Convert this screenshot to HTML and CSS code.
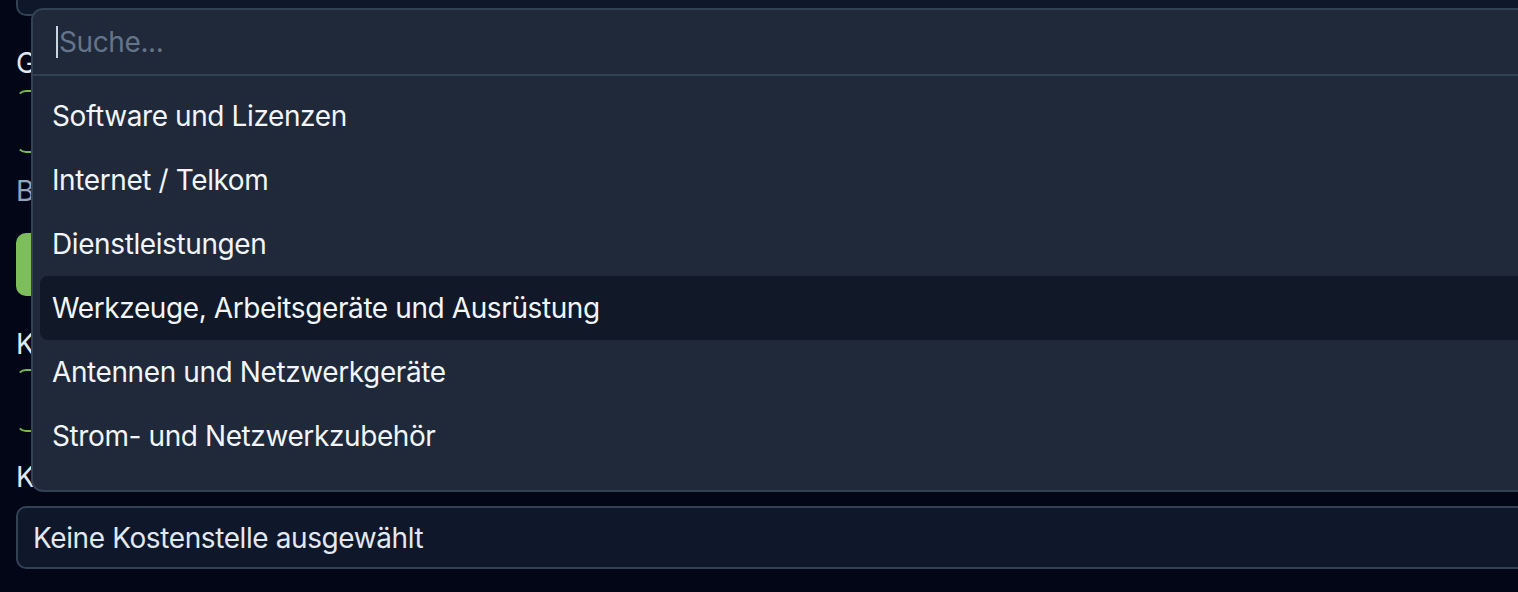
FILE: index.html
```html
<!DOCTYPE html>
<html lang="de">
<head>
<meta charset="utf-8">
<title>Kategorie auswählen</title>
<link rel="stylesheet" href="styles.css">
</head>
<body>
<div class="form">
  <div class="field field-top"></div>
  <div class="label label-g">Gegenstand</div>
  <div class="field field-green field-g"></div>
  <div class="label label-muted label-b">Beleg</div>
  <div class="button-green"></div>
  <div class="label label-k">Kategorie</div>
  <div class="field field-green field-k"></div>
  <div class="label label-k2">Kostenstelle</div>
  <div class="field field-select">Keine Kostenstelle ausgewählt</div>
</div>

<div class="popover">
  <div class="search">
    <span class="caret"></span>
    <span class="placeholder">Suche...</span>
  </div>
  <div class="list">
    <div class="item">Software und Lizenzen</div>
    <div class="item">Internet / Telkom</div>
    <div class="item">Dienstleistungen</div>
    <div class="item item-active">Werkzeuge, Arbeitsgeräte und Ausrüstung</div>
    <div class="item">Antennen und Netzwerkgeräte</div>
    <div class="item">Strom- und Netzwerkzubehör</div>
    <div class="item">Material für Installationen</div>
  </div>
</div>
</body>
</html>
```

FILE: styles.css
```css
* { box-sizing: border-box; }

html, body {
  margin: 0;
  padding: 0;
}

body {
  background: #020617;
  font-family: Inter, "Noto Sans", sans-serif;
  font-size: 28px;
  line-height: 40px;
  letter-spacing: -0.4px;
  color: #e2e8f0;
  width: 1518px;
  height: 592px;
  overflow: hidden;
  position: relative;
}

.form {
  display: flex;
  flex-direction: column;
  padding-left: 16px;
}

.field {
  width: 1600px;
  background: #0f172a;
  border: 2px solid #334155;
  border-radius: 10px;
}

.field-top {
  height: 16px;
  border-top: none;
  border-radius: 0 0 0 10px;
}

.label {
  height: 40px;
  white-space: nowrap;
  color: #e2e8f0;
}

.label-muted { color: #94a3b8; }

.label-g { margin-top: 27px; }
.label-b { margin-top: 18px; }
.label-k { margin-top: 28px; }
.label-k2 { margin-top: 25px; }

.field-green {
  height: 63px;
  background: #020617;
  border-color: #74b850;
  border-left-color: #020617;
}

.field-g { margin-top: 7px; }
.field-k { margin-top: 5px; }

.button-green {
  margin-top: 22px;
  width: 1600px;
  height: 63px;
  background: #7dbe5a;
  border-radius: 10px;
}

.field-select {
  margin-top: 9px;
  height: 63px;
  display: flex;
  align-items: center;
  padding-left: 15px;
  color: #e2e8f0;
  white-space: nowrap;
}

.popover {
  position: absolute;
  left: 31px;
  top: 8px;
  width: 1600px;
  height: 484px;
  background: #1f293a;
  border: 2px solid #334155;
  border-radius: 12px;
  overflow: hidden;
  display: flex;
  flex-direction: column;
}

.search {
  height: 66px;
  flex: none;
  display: flex;
  align-items: center;
  padding-left: 23px;
  border-bottom: 2px solid #334155;
}

.caret {
  width: 2px;
  height: 32px;
  background: #cbd5e1;
  margin-right: 1px;
}

.placeholder {
  color: #64748b;
}

.list {
  height: 412px;
  flex: none;
  overflow: hidden;
  display: flex;
  flex-direction: column;
  padding: 8px 8px 0 7px;
}

.item {
  height: 64px;
  flex: none;
  display: flex;
  align-items: center;
  padding-left: 12px;
  border-radius: 8px;
  color: #f1f5f9;
  white-space: nowrap;
}

.item-active {
  background: #111827;
}
```
